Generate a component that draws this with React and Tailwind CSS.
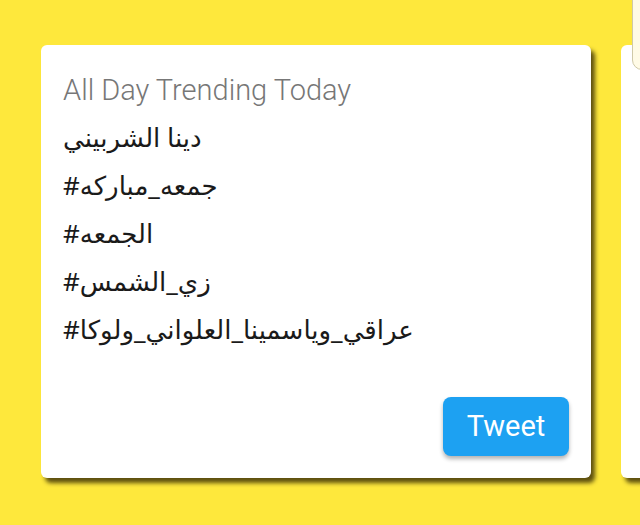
const TRENDS = [
  'دينا الشربيني',
  '#جمعه_مباركه',
  '#الجمعه',
  '#زي_الشمس',
  '#عراقي_وياسمينا_العلواني_ولوكا',
]

function TrendCard() {
  return (
    <div className="relative w-[550px] h-[433px] shrink-0 bg-white rounded-[6px] shadow-[4px_5px_4px_rgba(40,30,0,0.75)] px-[22px] pt-[28px]">
      <h2 className="font-['Roboto'] font-light text-[29px] leading-[34px] text-[#777777]">
        All Day Trending Today
      </h2>
      <ul className="mt-[6px] flex flex-col items-start">
        {TRENDS.map(t => (
          <li
            key={t}
            dir="ltr"
            className="h-[48px] leading-[48px] text-[26px] text-[#1a1a1a] font-['Noto_Sans','DejaVu_Sans',sans-serif]"
          >
            {t}
          </li>
        ))}
      </ul>
      <button className="absolute right-[22px] bottom-[22px] w-[126px] h-[59px] rounded-[8px] bg-[#1da1f2] text-white text-[29px] font-['Roboto'] shadow-[0_3px_4px_rgba(0,0,0,0.3)]">
        Tweet
      </button>
    </div>
  )
}

export default function App() {
  return (
    <div className="relative w-[640px] h-[525px] bg-[#fee83c] overflow-hidden">
      {/* sliver of a panel peeking at the top right */}
      <div className="absolute right-[-10px] top-[-4px] w-[18px] h-[74px] bg-[#fffbe6] border border-[#cfc9a8] rounded-bl-[10px]" />
      <div className="flex gap-[30px] pl-[41px] pt-[45px]">
        <TrendCard />
        <div className="w-[550px] h-[433px] shrink-0 bg-white rounded-[6px] shadow-[4px_5px_4px_rgba(40,30,0,0.75)]" />
      </div>
    </div>
  )
}
